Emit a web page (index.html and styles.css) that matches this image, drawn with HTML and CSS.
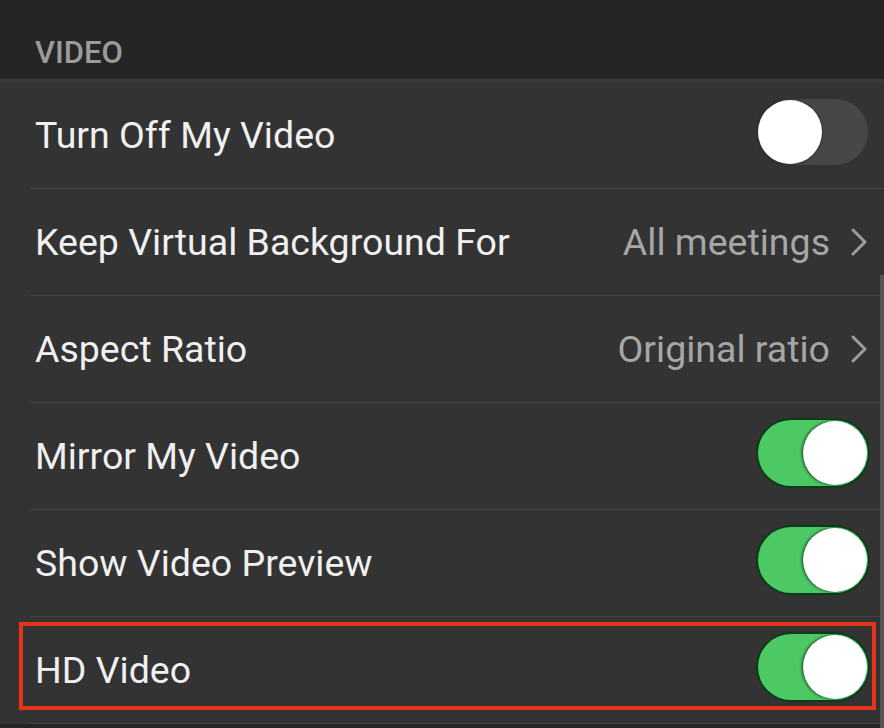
FILE: index.html
```html
<!DOCTYPE html>
<html>
<head>
<meta charset="utf-8">
<link rel="stylesheet" href="styles.css">
</head>
<body>
<div class="screen">
  <div class="section-header">VIDEO</div>
  <div class="list">
    <div class="row">
      <span class="label">Turn Off My Video</span>
      <span class="toggle off"><span class="knob"></span></span>
    </div>
    <div class="row">
      <span class="label">Keep Virtual Background For</span>
      <span class="value">All meetings<svg class="chev" width="18" height="30" viewBox="0 0 18 30"><path d="M3 3 L15 15 L3 27" fill="none" stroke="#9c9c9c" stroke-width="3" stroke-linecap="round" stroke-linejoin="round"/></svg></span>
    </div>
    <div class="row">
      <span class="label">Aspect Ratio</span>
      <span class="value">Original ratio<svg class="chev" width="18" height="30" viewBox="0 0 18 30"><path d="M3 3 L15 15 L3 27" fill="none" stroke="#9c9c9c" stroke-width="3" stroke-linecap="round" stroke-linejoin="round"/></svg></span>
    </div>
    <div class="row">
      <span class="label">Mirror My Video</span>
      <span class="toggle on"><span class="knob"></span></span>
    </div>
    <div class="row">
      <span class="label">Show Video Preview</span>
      <span class="toggle on"><span class="knob"></span></span>
    </div>
    <div class="row highlighted">
      <span class="label">HD Video</span>
      <span class="toggle on"><span class="knob"></span></span>
    </div>
  </div>
  <div class="scrollbar"></div>
</div>
</body>
</html>
```
FILE: styles.css
```css
html, body {
  margin: 0;
  padding: 0;
  background: #252525;
}
.screen {
  position: relative;
  width: 884px;
  height: 728px;
  overflow: hidden;
  background: #252525;
  font-family: Roboto, "Noto Sans", sans-serif;
}
.section-header {
  height: 82px;
  box-sizing: border-box;
  padding: 35px 0 0 35px;
  font-size: 31px;
  font-weight: 500;
  color: #9b9b9b;
  line-height: 36px;
  border-bottom: 3px solid #3b3b3b;
}
.list {
  background: #333333;
  padding-left: 30px;
}
.row {
  height: 106px;
  border-bottom: 1px solid #434343;
  display: flex;
  align-items: center;
  justify-content: space-between;
  padding-right: 16px;
  position: relative;
}
.label {
  color: #f0f0f0;
  font-size: 37.5px;
  padding-left: 5px;
}
.value {
  color: #a6a6a6;
  font-size: 37.5px;
  display: flex;
  align-items: center;
  gap: 20px;
}
.chev {
  display: block;
}
.toggle {
  position: relative;
  width: 110px;
  height: 66px;
  border-radius: 33px;
  box-sizing: border-box;
  margin-top: -6px;
}
.toggle.off {
  background: #474747;
}
.toggle.on {
  background: #4cc864;
  box-shadow: 0 0 0 2px #0e3b1a;
}
.knob {
  position: absolute;
  top: 1px;
  width: 64px;
  height: 64px;
  border-radius: 50%;
  background: #ffffff;
}
.toggle.off .knob {
  left: 0;
  box-shadow: 0 0 3px rgba(0,0,0,0.5);
}
.toggle.on .knob {
  right: 1px;
  box-shadow: -1px 0 3px #0e3b1a;
}
.highlighted::after {
  content: "";
  position: absolute;
  left: -11px;
  right: 8px;
  top: 5px;
  bottom: 13px;
  border: 4px solid #e5341c;
  pointer-events: none;
}
.scrollbar {
  position: absolute;
  right: 0;
  top: 275px;
  width: 4px;
  height: 453px;
  background: #555555;
}
```
